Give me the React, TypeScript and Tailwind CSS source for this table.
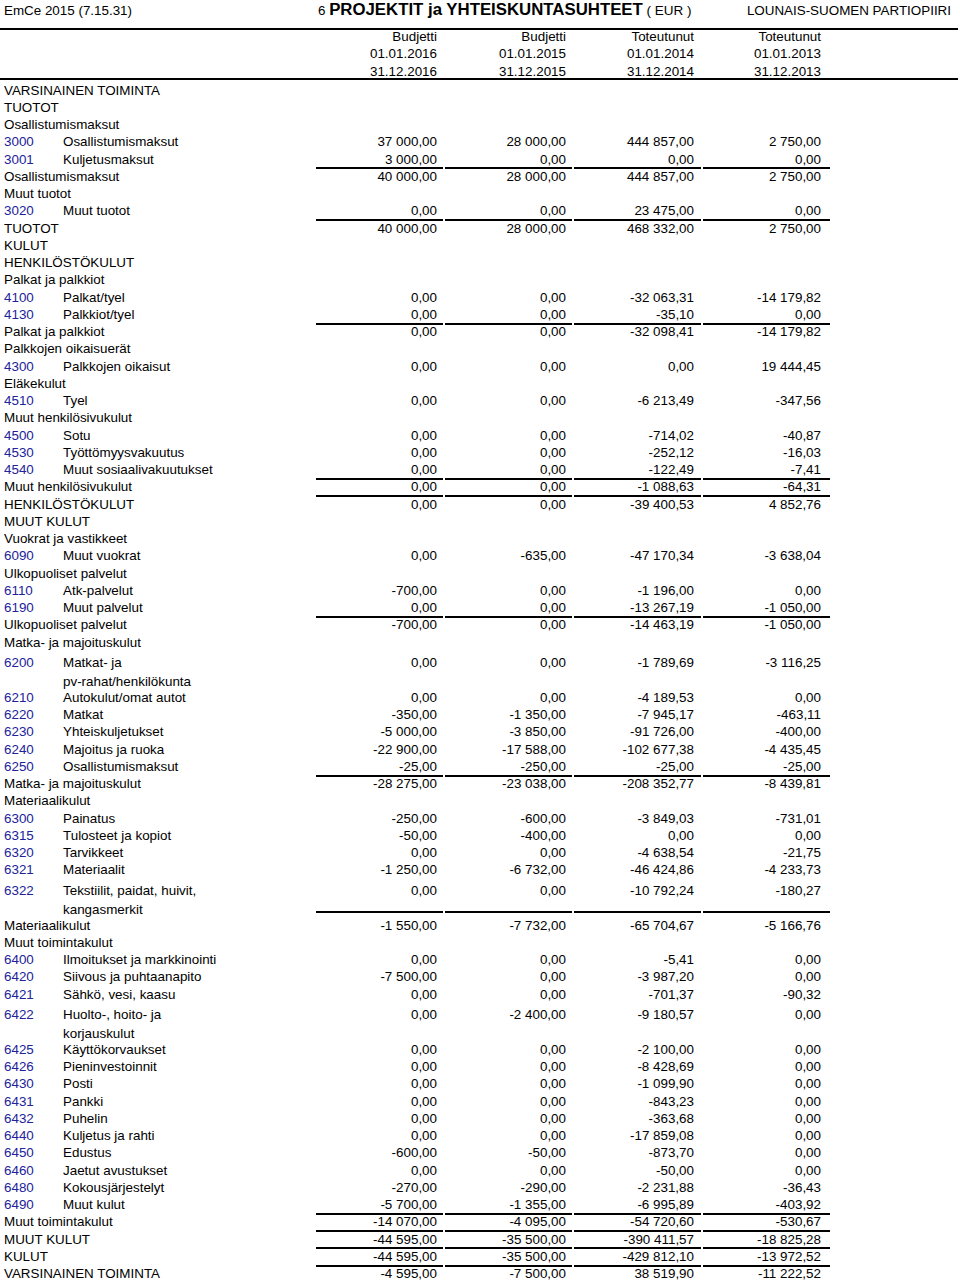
type Row = {
  code?: string
  label: string
  label2?: string
  v?: string[]
  u?: boolean
}

const rows: Row[] = [
  { label: 'VARSINAINEN TOIMINTA' },
  { label: 'TUOTOT' },
  { label: 'Osallistumismaksut' },
  { code: '3000', label: 'Osallistumismaksut', v: ['37 000,00', '28 000,00', '444 857,00', '2 750,00'] },
  { code: '3001', label: 'Kuljetusmaksut', v: ['3 000,00', '0,00', '0,00', '0,00'], u: true },
  { label: 'Osallistumismaksut', v: ['40 000,00', '28 000,00', '444 857,00', '2 750,00'] },
  { label: 'Muut tuotot' },
  { code: '3020', label: 'Muut tuotot', v: ['0,00', '0,00', '23 475,00', '0,00'], u: true },
  { label: 'TUOTOT', v: ['40 000,00', '28 000,00', '468 332,00', '2 750,00'] },
  { label: 'KULUT' },
  { label: 'HENKILÖSTÖKULUT' },
  { label: 'Palkat ja palkkiot' },
  { code: '4100', label: 'Palkat/tyel', v: ['0,00', '0,00', '-32 063,31', '-14 179,82'] },
  { code: '4130', label: 'Palkkiot/tyel', v: ['0,00', '0,00', '-35,10', '0,00'], u: true },
  { label: 'Palkat ja palkkiot', v: ['0,00', '0,00', '-32 098,41', '-14 179,82'] },
  { label: 'Palkkojen oikaisuerät' },
  { code: '4300', label: 'Palkkojen oikaisut', v: ['0,00', '0,00', '0,00', '19 444,45'] },
  { label: 'Eläkekulut' },
  { code: '4510', label: 'Tyel', v: ['0,00', '0,00', '-6 213,49', '-347,56'] },
  { label: 'Muut henkilösivukulut' },
  { code: '4500', label: 'Sotu', v: ['0,00', '0,00', '-714,02', '-40,87'] },
  { code: '4530', label: 'Työttömyysvakuutus', v: ['0,00', '0,00', '-252,12', '-16,03'] },
  { code: '4540', label: 'Muut sosiaalivakuutukset', v: ['0,00', '0,00', '-122,49', '-7,41'], u: true },
  { label: 'Muut henkilösivukulut', v: ['0,00', '0,00', '-1 088,63', '-64,31'], u: true },
  { label: 'HENKILÖSTÖKULUT', v: ['0,00', '0,00', '-39 400,53', '4 852,76'] },
  { label: 'MUUT KULUT' },
  { label: 'Vuokrat ja vastikkeet' },
  { code: '6090', label: 'Muut vuokrat', v: ['0,00', '-635,00', '-47 170,34', '-3 638,04'] },
  { label: 'Ulkopuoliset palvelut' },
  { code: '6110', label: 'Atk-palvelut', v: ['-700,00', '0,00', '-1 196,00', '0,00'] },
  { code: '6190', label: 'Muut palvelut', v: ['0,00', '0,00', '-13 267,19', '-1 050,00'], u: true },
  { label: 'Ulkopuoliset palvelut', v: ['-700,00', '0,00', '-14 463,19', '-1 050,00'] },
  { label: 'Matka- ja majoituskulut' },
  { code: '6200', label: 'Matkat- ja', label2: 'pv-rahat/henkilökunta', v: ['0,00', '0,00', '-1 789,69', '-3 116,25'] },
  { code: '6210', label: 'Autokulut/omat autot', v: ['0,00', '0,00', '-4 189,53', '0,00'] },
  { code: '6220', label: 'Matkat', v: ['-350,00', '-1 350,00', '-7 945,17', '-463,11'] },
  { code: '6230', label: 'Yhteiskuljetukset', v: ['-5 000,00', '-3 850,00', '-91 726,00', '-400,00'] },
  { code: '6240', label: 'Majoitus ja ruoka', v: ['-22 900,00', '-17 588,00', '-102 677,38', '-4 435,45'] },
  { code: '6250', label: 'Osallistumismaksut', v: ['-25,00', '-250,00', '-25,00', '-25,00'], u: true },
  { label: 'Matka- ja majoituskulut', v: ['-28 275,00', '-23 038,00', '-208 352,77', '-8 439,81'] },
  { label: 'Materiaalikulut' },
  { code: '6300', label: 'Painatus', v: ['-250,00', '-600,00', '-3 849,03', '-731,01'] },
  { code: '6315', label: 'Tulosteet ja kopiot', v: ['-50,00', '-400,00', '0,00', '0,00'] },
  { code: '6320', label: 'Tarvikkeet', v: ['0,00', '0,00', '-4 638,54', '-21,75'] },
  { code: '6321', label: 'Materiaalit', v: ['-1 250,00', '-6 732,00', '-46 424,86', '-4 233,73'] },
  { code: '6322', label: 'Tekstiilit, paidat, huivit,', label2: 'kangasmerkit', v: ['0,00', '0,00', '-10 792,24', '-180,27'], u: true },
  { label: 'Materiaalikulut', v: ['-1 550,00', '-7 732,00', '-65 704,67', '-5 166,76'] },
  { label: 'Muut toimintakulut' },
  { code: '6400', label: 'Ilmoitukset ja markkinointi', v: ['0,00', '0,00', '-5,41', '0,00'] },
  { code: '6420', label: 'Siivous ja puhtaanapito', v: ['-7 500,00', '0,00', '-3 987,20', '0,00'] },
  { code: '6421', label: 'Sähkö, vesi, kaasu', v: ['0,00', '0,00', '-701,37', '-90,32'] },
  { code: '6422', label: 'Huolto-, hoito- ja', label2: 'korjauskulut', v: ['0,00', '-2 400,00', '-9 180,57', '0,00'] },
  { code: '6425', label: 'Käyttökorvaukset', v: ['0,00', '0,00', '-2 100,00', '0,00'] },
  { code: '6426', label: 'Pieninvestoinnit', v: ['0,00', '0,00', '-8 428,69', '0,00'] },
  { code: '6430', label: 'Posti', v: ['0,00', '0,00', '-1 099,90', '0,00'] },
  { code: '6431', label: 'Pankki', v: ['0,00', '0,00', '-843,23', '0,00'] },
  { code: '6432', label: 'Puhelin', v: ['0,00', '0,00', '-363,68', '0,00'] },
  { code: '6440', label: 'Kuljetus ja rahti', v: ['0,00', '0,00', '-17 859,08', '0,00'] },
  { code: '6450', label: 'Edustus', v: ['-600,00', '-50,00', '-873,70', '0,00'] },
  { code: '6460', label: 'Jaetut avustukset', v: ['0,00', '0,00', '-50,00', '0,00'] },
  { code: '6480', label: 'Kokousjärjestelyt', v: ['-270,00', '-290,00', '-2 231,88', '-36,43'] },
  { code: '6490', label: 'Muut kulut', v: ['-5 700,00', '-1 355,00', '-6 995,89', '-403,92'], u: true },
  { label: 'Muut toimintakulut', v: ['-14 070,00', '-4 095,00', '-54 720,60', '-530,67'], u: true },
  { label: 'MUUT KULUT', v: ['-44 595,00', '-35 500,00', '-390 411,57', '-18 825,28'], u: true },
  { label: 'KULUT', v: ['-44 595,00', '-35 500,00', '-429 812,10', '-13 972,52'], u: true },
  { label: 'VARSINAINEN TOIMINTA', v: ['-4 595,00', '-7 500,00', '38 519,90', '-11 222,52'] },
]

// oikea sisennys sarakkeittain
const pads = ['pr-[6px]', 'pr-[6px]', 'pr-[7px]', 'pr-[9px]']

const header = [
  ['Budjetti', 'Budjetti', 'Toteutunut', 'Toteutunut'],
  ['01.01.2016', '01.01.2015', '01.01.2014', '01.01.2013'],
  ['31.12.2016', '31.12.2015', '31.12.2014', '31.12.2013'],
]

function Values({ v, u, tall }: { v?: string[]; u?: boolean; tall?: boolean }) {
  return (
    <div className="flex gap-[2px]">
      {[0, 1, 2, 3].map((i) =>
        tall ? (
          <div
            key={i}
            className={`w-[127px] text-right leading-[19px] whitespace-nowrap ${pads[i]} ${u ? 'h-[32px] border-b-2 border-black' : ''}`}
          >
            {v?.[i]}
          </div>
        ) : (
          <div
            key={i}
            className={`flex w-[127px] items-center justify-end whitespace-nowrap ${pads[i]} ${u ? 'translate-y-px border-b-2 border-black' : ''}`}
          >
            {v?.[i]}
          </div>
        ),
      )}
    </div>
  )
}

function ReportRow({ row }: { row: Row }) {
  if (row.label2) {
    return (
      <div className="flex h-[38px] items-start pt-[2px]">
        <div className="w-[63px] pl-[4px] leading-[19px] text-[#22229a]">{row.code}</div>
        <div className="w-[253px] leading-[19px]">
          <div>{row.label}</div>
          <div>{row.label2}</div>
        </div>
        <Values v={row.v} u={row.u} tall />
      </div>
    )
  }
  return (
    <div className="flex h-[17.25px] items-stretch">
      {row.code ? (
        <>
          <div className="flex w-[63px] items-center pl-[4px] text-[#22229a]">{row.code}</div>
          <div className="flex w-[253px] items-center whitespace-nowrap">{row.label}</div>
        </>
      ) : (
        <div className="flex w-[316px] items-center pl-[4px] whitespace-nowrap">{row.label}</div>
      )}
      <Values v={row.v} u={row.u} />
    </div>
  )
}

export default function App() {
  return (
    <div className="min-h-[1284px] bg-white font-['Liberation_Sans',Arial,sans-serif] text-[13.4px] text-black">
      <div className="w-[958px]">
        <div className="flex h-[30px] items-baseline border-b-2 border-black pt-[1px] leading-[18px]">
          <div className="w-[318px] pl-[4px]">EmCe 2015 (7.15.31)</div>
          <div className="whitespace-nowrap">
            6 <span className="text-[16.8px] font-bold">PROJEKTIT ja YHTEISKUNTASUHTEET</span>
            <span className="text-[13.5px]"> ( EUR )</span>
          </div>
          <div className="ml-auto pr-[7px]">LOUNAIS-SUOMEN PARTIOPIIRI</div>
        </div>

        <div className="flex h-[50px] flex-col border-b-2 border-black">
          <div className="-mt-[2px]">
            {header.map((line, li) => (
              <div key={li} className="flex h-[17.6px] items-center pl-[316px]">
                <div className="flex gap-[2px]">
                  {line.map((t, i) => (
                    <div key={i} className={`w-[127px] text-right ${pads[i]}`}>
                      {t}
                    </div>
                  ))}
                </div>
              </div>
            ))}
          </div>
        </div>

        <div className="pt-[2px]">
          {rows.map((r, i) => (
            <ReportRow key={i} row={r} />
          ))}
        </div>
      </div>
    </div>
  )
}
